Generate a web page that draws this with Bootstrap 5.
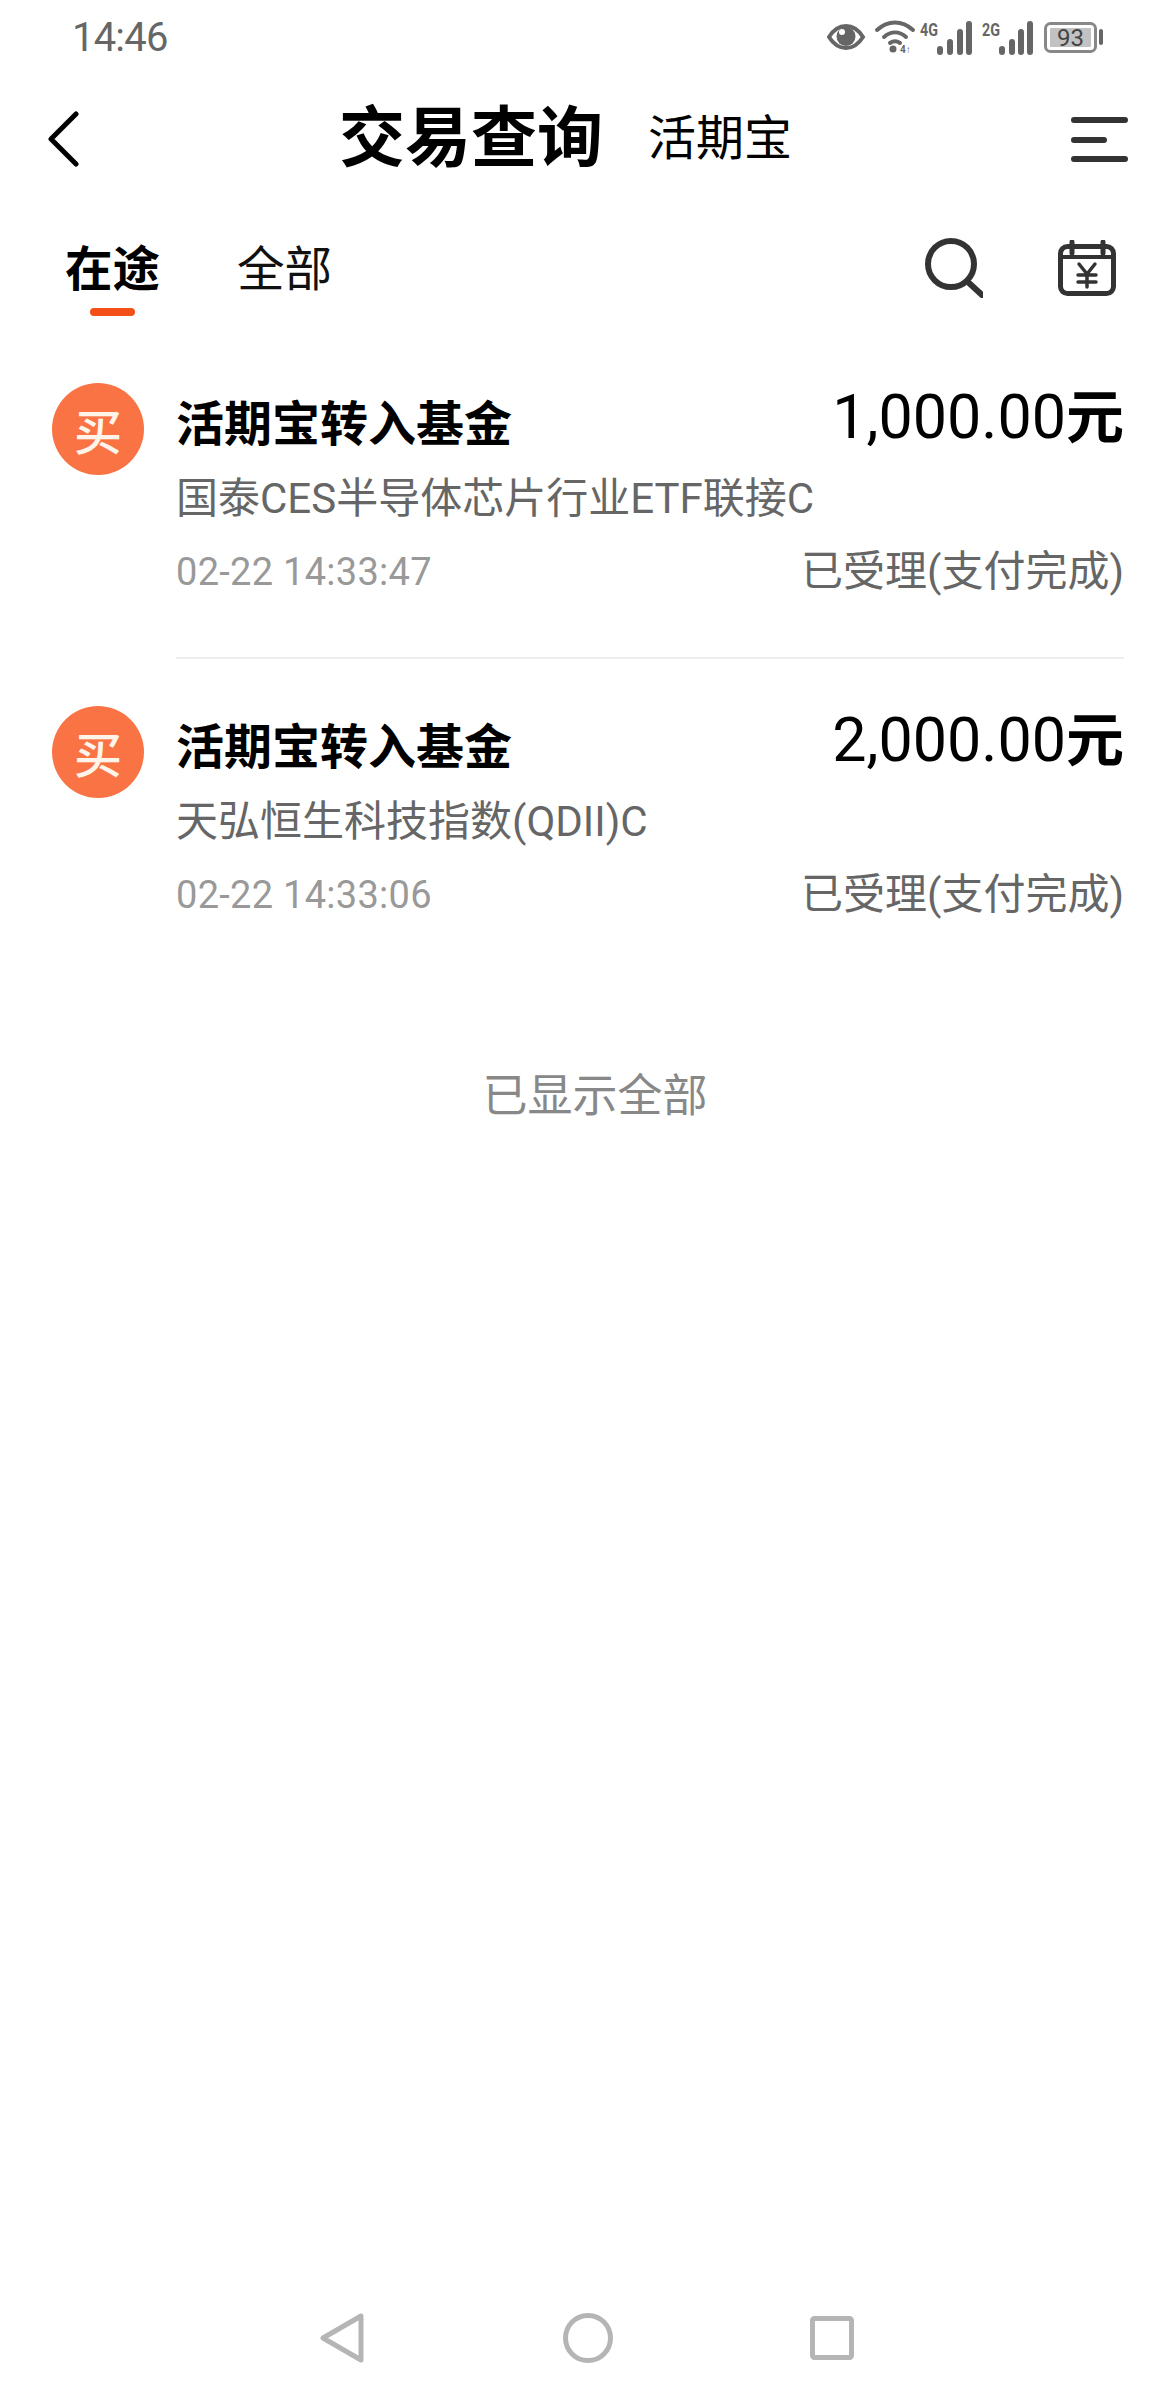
<!DOCTYPE html>
<html lang="zh-CN">
<head>
<meta charset="utf-8">
<title>交易查询</title>
<link href="https://cdn.jsdelivr.net/npm/bootstrap@5.3.0/dist/css/bootstrap.min.css" rel="stylesheet">
<style>
body{background:#fff;font-family:Roboto,"Noto Sans CJK SC",sans-serif;color:#000}
.phone-page{width:1176px;min-height:2400px}
.status-strip{height:75px;padding:0 69px 0 72px;color:#666}
.status-time{font-size:40px;line-height:75px;letter-spacing:-.8px;color:#666;font-weight:400}
.status-icons{height:40px}
.top-head{height:128px;padding:0 48px}
.head-title{font-size:66px;font-weight:700;margin-left:260px;line-height:80px;color:#000}
.head-sub{font-size:48px;margin-left:45px;line-height:80px;color:#000}
.tab-strip{padding:37px 60px 0 65px;height:115px}
.tab-item{font-size:47.5px;line-height:60px;color:#111;margin-right:77px}
.tab-on{font-weight:700;color:#000;position:relative}
.tab-on::after{content:"";position:absolute;left:25px;top:68px;width:45px;height:8px;border-radius:4px;background:#f4511a}
.tool-gap{gap:75px;margin-top:-2px}
.fund-list{padding:65px 52px 0 52px}
.fund-row{gap:32px;margin-bottom:47px}
.buy-mark{width:92px;height:92px;background:#fa7345;color:#fff4ea;font-size:48px;font-weight:500;line-height:92px;text-align:center;font-family:"Noto Sans CJK SC",sans-serif;flex:none}
.fund-body{padding:2px 0 46px}
.fund-body-line{border-bottom:2px solid #eee}
.fund-name{font-size:48px;font-weight:700;line-height:80px;color:#000}
.fund-amount{font-size:61px;line-height:76px;color:#000;margin-top:-6px}
.fund-unit{font-size:58px;font-weight:700}
.fund-desc{font-size:42px;line-height:68px;color:#666}
.fund-time{font-size:38px;line-height:78px;color:#999;letter-spacing:.28px}
.fund-state{font-size:42px;line-height:78px;color:#666}
.list-end{font-size:45px;line-height:50px;color:#888;margin-top:45px;padding-left:14px}
.sys-nav{padding:0 0 37px 320px}
.sys-a{margin-right:199px}
.sys-b{margin-right:197px}
</style>
</head>
<body class="m-0">
<div class="phone-page d-flex flex-column">
  <div class="status-strip d-flex align-items-center justify-content-between">
    <span class="status-time">14:46</span>
    <svg class="status-icons" width="280" height="40" viewBox="827 17 280 40" fill="none">
      <path d="M829 36c5-8 11-11 17-11s12 3 17 11c-5 8-11 11-17 11s-12-3-17-11z" stroke="#666" stroke-width="4"/>
      <circle cx="846" cy="35.500" r="9.500" fill="#666"/><circle cx="842" cy="31" r="3" fill="#fff"/>
      <path d="M877 29c11-10 25-10 36 0M884 36c7-6 15-6 22 0M890 42c3-2 7-2 10 0" stroke="#666" stroke-width="4" stroke-linecap="round"/>
      <circle cx="893" cy="48" r="3.500" fill="#666"/>
      <text x="900" y="52" font-family="Roboto" font-size="10" font-weight="700" fill="#666">4↑</text>
      <text x="920" y="35" font-family="Roboto" font-size="18" font-weight="700" fill="#666" textLength="18" lengthAdjust="spacingAndGlyphs">4G</text>
      <path d="M940 48v3M950 41v10M960 31v20M969 23v28" stroke="#666" stroke-width="6" stroke-linecap="round"/>
      <text x="982" y="35" font-family="Roboto" font-size="18" font-weight="700" fill="#666" textLength="18" lengthAdjust="spacingAndGlyphs">2G</text>
      <path d="M1002 48v3M1012 41v10M1021 31v20M1030 23v28" stroke="#666" stroke-width="6" stroke-linecap="round"/>
      <rect x="1045.500" y="22.500" width="50" height="28" rx="5" stroke="#888" stroke-width="3"/>
      <rect x="1050" y="27" width="41" height="19" rx="1" fill="#c2c2c2"/>
      <text x="1070.500" y="45" font-family="Roboto" font-size="24" fill="#444" text-anchor="middle">93</text>
      <rect x="1099" y="28" width="4" height="16" rx="2" fill="#666"/>
    </svg>
  </div>

  <div class="top-head d-flex align-items-center">
    <svg width="31" height="56" viewBox="0 0 31 56" fill="none"><path d="M28 3 3 28l25 25" stroke="#000" stroke-width="5" stroke-linecap="round" stroke-linejoin="round"/></svg>
    <span class="head-title">交易查询</span>
    <span class="head-sub">活期宝</span>
    <svg class="ms-auto" width="57" height="45" viewBox="0 0 57 45" fill="none"><path d="M3 3h51M3 23h30M3 42h51" stroke="#333" stroke-width="6" stroke-linecap="round"/></svg>
  </div>

  <div class="tab-strip d-flex align-items-start">
    <span class="tab-item tab-on">在途</span>
    <span class="tab-item">全部</span>
    <div class="ms-auto d-flex align-items-center tool-gap">
      <svg width="60" height="60" viewBox="0 0 60 60" fill="none"><circle cx="28" cy="26" r="23" stroke="#333" stroke-width="6"/><path d="M46 45l13 12" stroke="#333" stroke-width="6" stroke-linecap="round"/></svg>
      <svg width="58" height="56" viewBox="0 0 58 56" fill="none"><rect x="2.500" y="6.500" width="53" height="47" rx="7" stroke="#333" stroke-width="5"/><path d="M3 17h52" stroke="#333" stroke-width="4"/><path d="M14 2v11M45 2v11" stroke="#333" stroke-width="5" stroke-linecap="round"/><path d="M21 24l8 10 8-10M20 35h18M20 42h18M29 34v13" stroke="#333" stroke-width="3.500" stroke-linecap="round" stroke-linejoin="round"/></svg>
    </div>
  </div>

  <div class="fund-list">
    <div class="fund-row d-flex align-items-start">
      <div class="buy-mark rounded-circle">买</div>
      <div class="fund-body fund-body-line flex-grow-1">
        <div class="d-flex justify-content-between">
          <span class="fund-name">活期宝转入基金</span>
          <span class="fund-amount">1,000.00<span class="fund-unit">元</span></span>
        </div>
        <div class="fund-desc">国泰CES半导体芯片行业ETF联接C</div>
        <div class="d-flex justify-content-between">
          <span class="fund-time">02-22 14:33:47</span>
          <span class="fund-state">已受理(支付完成)</span>
        </div>
      </div>
    </div>
    <div class="fund-row d-flex align-items-start">
      <div class="buy-mark rounded-circle">买</div>
      <div class="fund-body flex-grow-1">
        <div class="d-flex justify-content-between">
          <span class="fund-name">活期宝转入基金</span>
          <span class="fund-amount">2,000.00<span class="fund-unit">元</span></span>
        </div>
        <div class="fund-desc">天弘恒生科技指数(QDII)C</div>
        <div class="d-flex justify-content-between">
          <span class="fund-time">02-22 14:33:06</span>
          <span class="fund-state">已受理(支付完成)</span>
        </div>
      </div>
    </div>
  </div>

  <div class="list-end text-center">已显示全部</div>

  <div class="sys-nav mt-auto d-flex align-items-center">
    <svg class="sys-a" width="44" height="50" viewBox="0 0 44 50" fill="none"><path d="M41 3v44L3 25z" stroke="#b5b5b5" stroke-width="5" stroke-linejoin="round"/></svg>
    <svg class="sys-b" width="50" height="50" viewBox="0 0 50 50" fill="none"><circle cx="25" cy="25" r="22.500" stroke="#b5b5b5" stroke-width="5"/></svg>
    <svg width="44" height="44" viewBox="0 0 44 44" fill="none"><rect x="2.500" y="2.500" width="39" height="39" rx="2" stroke="#b5b5b5" stroke-width="5"/></svg>
  </div>
</div>
<script src="https://cdn.jsdelivr.net/npm/bootstrap@5.3.0/dist/js/bootstrap.bundle.min.js"></script>
</body>
</html>
